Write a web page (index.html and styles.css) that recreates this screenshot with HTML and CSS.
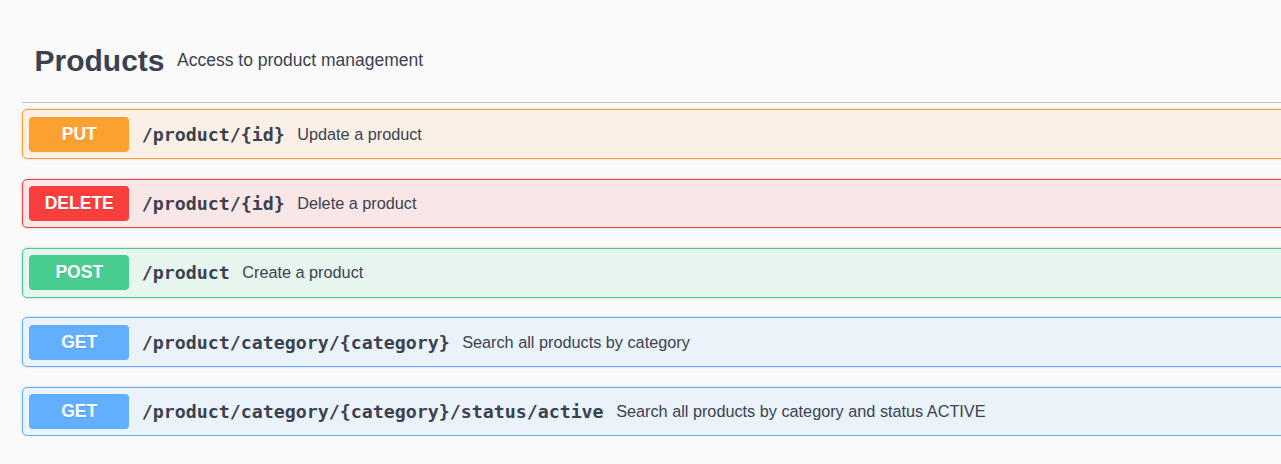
FILE: index.html
```html
<!DOCTYPE html>
<html>
<head>
<meta charset="utf-8">
<link rel="stylesheet" href="styles.css">
</head>
<body>
<div class="wrapper">
  <div class="tag">
    <h3 class="tag-title">Products</h3>
    <span class="tag-desc">Access to product management</span>
  </div>
  <div class="ops">
    <div class="op op-put">
      <span class="method">PUT</span>
      <span class="path">/product/{id}</span>
      <span class="summary">Update a product</span>
    </div>
    <div class="op op-delete">
      <span class="method">DELETE</span>
      <span class="path">/product/{id}</span>
      <span class="summary">Delete a product</span>
    </div>
    <div class="op op-post">
      <span class="method">POST</span>
      <span class="path">/product</span>
      <span class="summary">Create a product</span>
    </div>
    <div class="op op-get">
      <span class="method">GET</span>
      <span class="path">/product/category/{category}</span>
      <span class="summary">Search all products by category</span>
    </div>
    <div class="op op-get">
      <span class="method">GET</span>
      <span class="path">/product/category/{category}/status/active</span>
      <span class="summary">Search all products by category and status ACTIVE</span>
    </div>
  </div>
</div>
</body>
</html>
```

FILE: styles.css
```css
html, body {
  margin: 0;
  padding: 0;
  background: #fafafa;
  overflow: hidden;
}

body {
  font-family: "Liberation Sans", Arial, sans-serif;
  color: #3b4151;
}

.wrapper {
  padding: 19px 0 0 22px;
  margin-right: -40px;
}

.tag {
  display: flex;
  align-items: center;
  min-height: 58px;
  padding: 12.5px 25px 12.5px 12.5px;
  border-bottom: 1px solid rgba(59, 65, 81, 0.3);
  margin-bottom: 6.25px;
}

.tag-title {
  margin: 0;
  font-size: 30px;
  font-weight: 700;
  color: #3b4151;
}

.tag-desc {
  margin-left: 12.5px;
  font-size: 17.5px;
  color: #3b4151;
}

.ops {
  display: flex;
  flex-direction: column;
  gap: 19.6px;
}

.op {
  display: flex;
  align-items: center;
  padding: 6.25px;
  border: 1px solid;
  border-radius: 5px;
  box-shadow: 0 0 3px rgba(0, 0, 0, 0.19);
}

.method {
  min-width: 100px;
  height: 35.25px;
  line-height: 35.25px;
  text-align: center;
  font-size: 17.5px;
  font-weight: 700;
  color: #fff;
  border-radius: 4px;
  text-shadow: 0 1px 0 rgba(0, 0, 0, 0.1);
}

.path {
  padding: 0 12.5px;
  font-family: "DejaVu Sans Mono", "Liberation Mono", monospace;
  font-size: 18.27px;
  font-weight: 700;
  color: #3b4151;
}

.summary {
  font-size: 16.25px;
  color: #3b4151;
}

.op-put {
  background: rgba(252, 161, 48, 0.1);
  border-color: #fca130;
}
.op-put .method { background: #fca130; }

.op-delete {
  background: rgba(249, 62, 62, 0.1);
  border-color: #f93e3e;
}
.op-delete .method { background: #f93e3e; }

.op-post {
  background: rgba(73, 204, 144, 0.1);
  border-color: #49cc90;
}
.op-post .method { background: #49cc90; }

.op-get {
  background: rgba(97, 175, 254, 0.1);
  border-color: #61affe;
}
.op-get .method { background: #61affe; }
```
